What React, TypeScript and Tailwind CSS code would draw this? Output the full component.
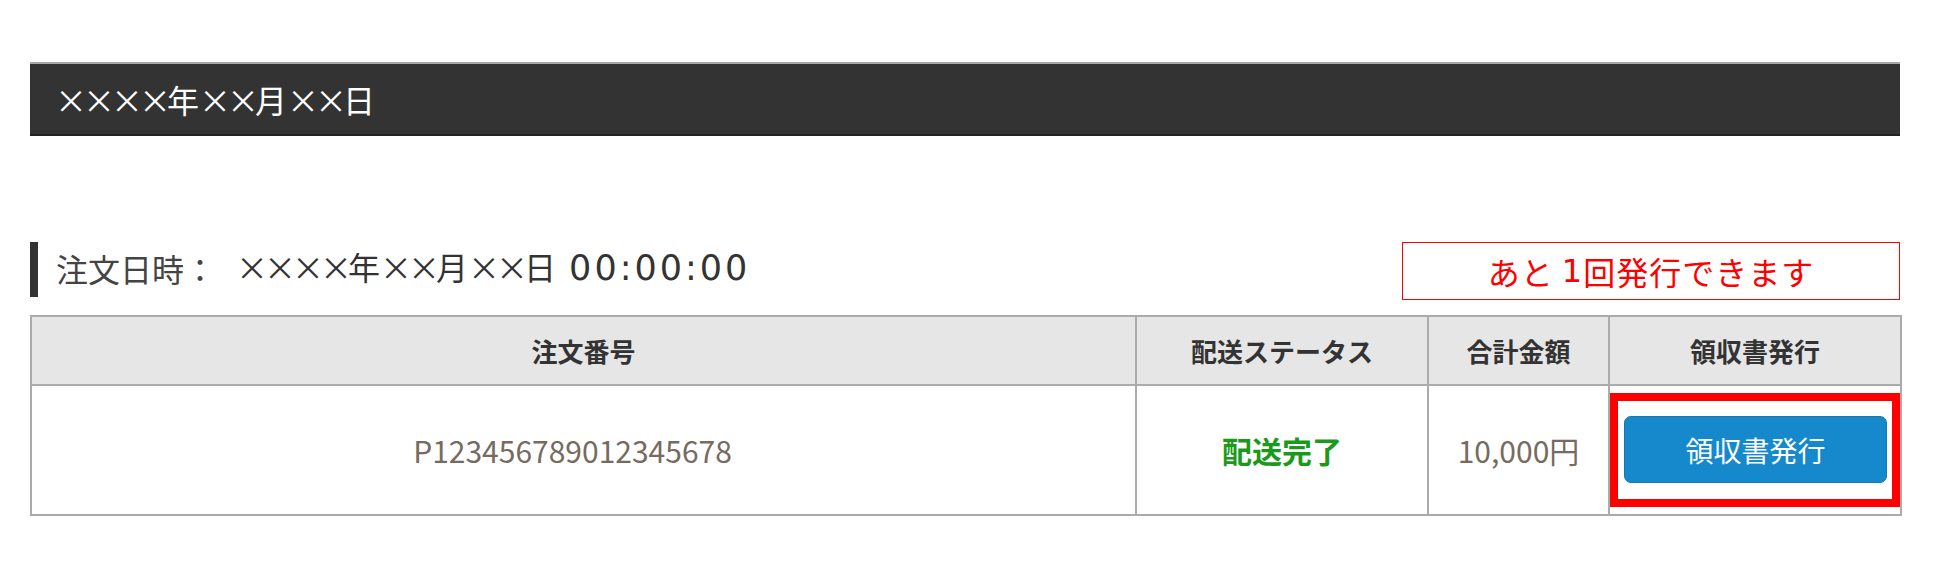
const jp = "font-['Noto_Sans_CJK_JP',sans-serif]"
const wide = "font-['DejaVu_Sans','Noto_Sans_CJK_JP',sans-serif]"

// full-width × glyphs are tighter in the original font
function X({ n }: { n: number }) {
  return <span className="tracking-[-4px]">{'×'.repeat(n)}</span>
}

function DateText() {
  return (
    <>
      <X n={4} />年<X n={2} />月<X n={2} />日
    </>
  )
}

function OrderTable() {
  return (
    <table className="w-[1870px] table-fixed border-collapse">
      <colgroup>
        <col className="w-[1105px]" />
        <col className="w-[292px]" />
        <col className="w-[181px]" />
        <col className="w-[292px]" />
      </colgroup>
      <thead>
        <tr className="h-[69px] bg-[#e6e6e6] text-[26px] font-bold text-[#333]">
          <th className="border-2 border-[#ababab] text-center">注文番号</th>
          <th className="border-2 border-[#ababab] text-center">配送ステータス</th>
          <th className="border-2 border-[#ababab] text-center">合計金額</th>
          <th className="border-2 border-[#ababab] text-center">領収書発行</th>
        </tr>
      </thead>
      <tbody>
        <tr className="h-[130px] text-[30px]">
          <td className="border-2 border-[#ababab] pr-[22px] text-center text-[#776a60]">P123456789012345678</td>
          <td className="border-2 border-[#ababab] text-center font-bold text-[#1a9a1a]">配送完了</td>
          <td className="border-2 border-[#ababab] text-center text-[#776a60]">10,000円</td>
          <td className="border-2 border-[#ababab] p-0 align-top">
            <div className="mt-[7px] mb-[5px] border-[8px] border-[#ff0000] pt-[15px] pr-[5px] pb-[16px] pl-[6px]">
              <button
                type="button"
                className="flex h-[67px] w-full items-center justify-center rounded-[7px] border border-[#1279b5] bg-[#1589cc] text-[28px] text-white"
              >
                領収書発行
              </button>
            </div>
          </td>
        </tr>
      </tbody>
    </table>
  )
}

export default function App() {
  return (
    <div className={`${jp} min-h-[562px] bg-white pt-[62px] pr-[36px] pl-[30px]`}>
      <div className="flex h-[74px] items-center border-t-2 border-b-2 border-t-[#a8a8a8] border-b-[#222] bg-[#333] pl-[25px] text-[32px] text-white">
        <DateText />
      </div>

      <div className="mt-[106px] flex h-[58px] items-start">
        <div className="h-[55px] w-[8px] bg-[#333]" />
        <div className="ml-[18px] flex h-[52px] items-center text-[32px] text-[#444]">
          <span>注文日時：</span>
          <span className="ml-[20px] text-[#333]">
            <DateText />
            <span className={`${wide} ml-[13px] text-[35px] tracking-[3px]`}>00:00:00</span>
          </span>
        </div>
        <div className="ml-auto flex h-[58px] w-[498px] items-center justify-center border border-[#ff0000] text-[32px] tracking-[1px] text-[#ff0000]">
          あと <span className={`${wide} ml-[8px]`}>1</span>回発行できます
        </div>
      </div>

      <div className="mt-[15px]">
        <OrderTable />
      </div>
    </div>
  )
}
